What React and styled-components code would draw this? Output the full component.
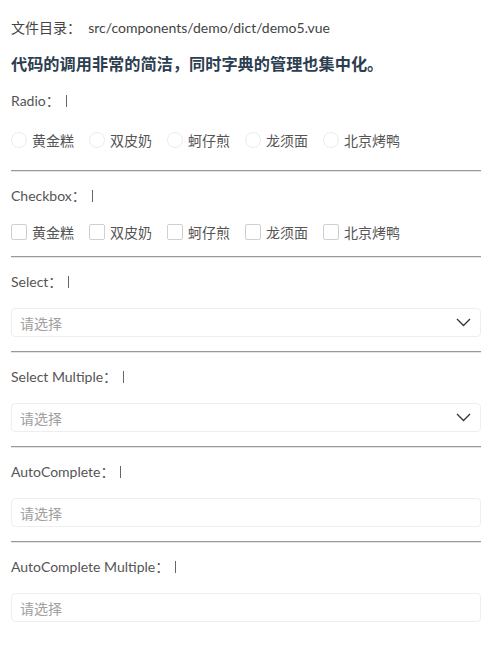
import React from 'react';
import styled, { createGlobalStyle } from 'styled-components';

const Global = createGlobalStyle`
    body {
        margin: 0;
        background: #ffffff;
        font-family: Lato, "Noto Sans CJK SC", sans-serif;
        color: #444;
    }
`;

const Page = styled.main`
    width: 470px;
    padding: 18px 21px 20px 11px;
    display: flex;
    flex-direction: column;
`;

const Path = styled.div`
    font-size: 14px;
    line-height: 20px;
    color: #444;
`;

const Title = styled.h3`
    margin: 14px 0 1px;
    font-size: 16.2px;
    line-height: 24px;
    font-weight: bold;
    color: #2c3e50;
`;

const Label = styled.div`
    margin-top: 14px;
    font-size: 14px;
    line-height: 20px;
    color: #555;
    display: flex;
    align-items: center;
`;

const Cursor = styled.span`
    display: inline-block;
    width: 1px;
    height: 12px;
    margin-left: 6px;
    background: #666;
`;

const Group = styled.div`
    margin-top: ${p => p.gap}px;
    display: flex;
    height: 20px;
    align-items: center;
`;

const Option = styled.label`
    width: 78px;
    display: flex;
    align-items: center;
    font-size: 14px;
    color: #555;
`;

const Mark = styled.span`
    width: 16px;
    height: 16px;
    box-sizing: border-box;
    margin-right: 5px;
    border: 1px solid ${p => (p.round ? '#ececec' : '#d0d0d0')};
    border-radius: ${p => (p.round ? '50%' : '2px')};
    background: #fff;
`;

const Field = styled.div`
    margin-top: 16px;
    height: 29px;
    box-sizing: border-box;
    border: 1px solid #eeeeee;
    border-radius: 4px;
    padding: 0 9px 0 8px;
    display: flex;
    align-items: center;
    justify-content: space-between;
    font-size: 14px;
    color: #a0a0a0;
`;

const Line = styled.hr`
    margin: ${p => p.gap}px 0 0;
    border: 0;
    border-top: 1px solid #999;
    border-bottom: 1px solid #e4e4e4;
`;

const foods = ['黄金糕', '双皮奶', '蚵仔煎', '龙须面', '北京烤鸭'];

const Chevron = () => (
    <svg width="15" height="9" viewBox="0 0 15 9">
        <path d="M1 1 L7.5 7.5 L14 1" fill="none" stroke="#333" strokeWidth="1.3" />
    </svg>
);

const Choices = ({ round, gap }) => (
    <Group gap={gap}>
        {foods.map(f => (
            <Option key={f}>
                <Mark round={round} />
                {f}
            </Option>
        ))}
    </Group>
);

const Heading = ({ text }) => (
    <Label>
        {text}：<Cursor />
    </Label>
);

export default function App() {
    return (
        <Page>
            <Global />
            <Path>文件目录：&nbsp; src/components/demo/dict/demo5.vue</Path>
            <Title>代码的调用非常的简洁，同时字典的管理也集中化。</Title>

            <Heading text="Radio" />
            <Choices round gap={19} />
            <Line gap={20} />

            <Heading text="Checkbox" />
            <Choices gap={16} />
            <Line gap={14} />

            <Heading text="Select" />
            <Field>请选择<Chevron /></Field>
            <Line gap={14} />

            <Heading text="Select Multiple" />
            <Field>请选择<Chevron /></Field>
            <Line gap={14} />

            <Heading text="AutoComplete" />
            <Field>请选择</Field>
            <Line gap={14} />

            <Heading text="AutoComplete Multiple" />
            <Field>请选择</Field>
        </Page>
    );
}
